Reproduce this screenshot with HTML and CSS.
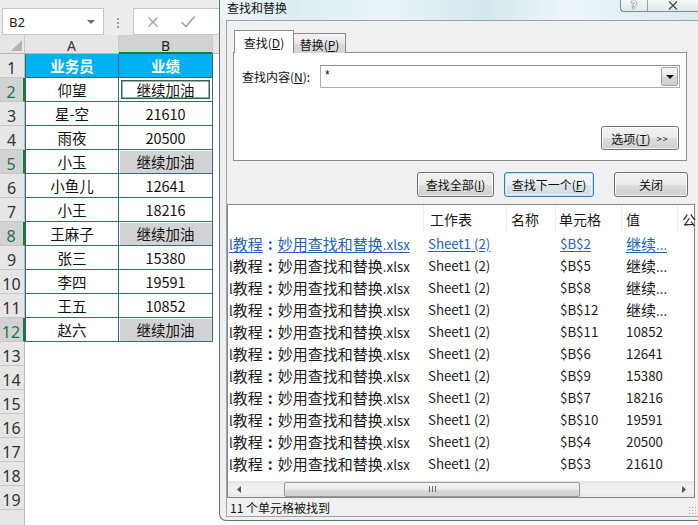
FILE: index.html
```html
<!DOCTYPE html>
<html lang="zh-CN">
<head>
<meta charset="utf-8">
<title>查找和替换</title>
<link rel="stylesheet" href="styles.css">
</head>
<body>
<div class="screen">
  <div class="sheet">
    <div class="fbar">
      <div class="namebox"><span>B2</span><span class="nb-arrow"></span></div>
      <div class="dots"><i></i><i></i><i></i></div>
      <div class="fbox">
        <svg class="ico-x" width="12" height="12" viewBox="0 0 12 12"><path d="M1.5 1.5L10.5 10.5M10.5 1.5L1.5 10.5" stroke="#a3a3a3" stroke-width="1.4" fill="none"/></svg>
        <svg class="ico-ok" width="16" height="13" viewBox="0 0 16 13"><path d="M1.5 7L6 11.5L14.5 1.5" stroke="#a3a3a3" stroke-width="1.6" fill="none"/></svg>
      </div>
    </div>
    <div class="grid">
      <div class="ch corner"><svg width="25" height="19" viewBox="0 0 25 19"><path d="M22 5V16H11Z" fill="#b3b3b3"/></svg></div>
      <div class="ch">A</div>
      <div class="ch sel">B</div>
      <div class="ch last"></div>

      <div class="rh">1</div><div class="c a h">业务员</div><div class="c b h">业绩</div><div class="e"></div>
      <div class="rh on">2</div><div class="c a">仰望</div><div class="c b act">继续加油</div><div class="e"></div>
      <div class="rh">3</div><div class="c a">星-空</div><div class="c b">21610</div><div class="e"></div>
      <div class="rh">4</div><div class="c a">雨夜</div><div class="c b">20500</div><div class="e"></div>
      <div class="rh on">5</div><div class="c a">小玉</div><div class="c b g">继续加油</div><div class="e"></div>
      <div class="rh">6</div><div class="c a">小鱼儿</div><div class="c b">12641</div><div class="e"></div>
      <div class="rh">7</div><div class="c a">小王</div><div class="c b">18216</div><div class="e"></div>
      <div class="rh on">8</div><div class="c a">王麻子</div><div class="c b g">继续加油</div><div class="e"></div>
      <div class="rh">9</div><div class="c a">张三</div><div class="c b">15380</div><div class="e"></div>
      <div class="rh">10</div><div class="c a">李四</div><div class="c b">19591</div><div class="e"></div>
      <div class="rh">11</div><div class="c a">王五</div><div class="c b">10852</div><div class="e"></div>
      <div class="rh on">12</div><div class="c a">赵六</div><div class="c b g">继续加油</div><div class="e"></div>
      <div class="rh">13</div><div class="blank"></div>
      <div class="rh">14</div><div class="blank"></div>
      <div class="rh">15</div><div class="blank"></div>
      <div class="rh">16</div><div class="blank"></div>
      <div class="rh">17</div><div class="blank"></div>
      <div class="rh">18</div><div class="blank"></div>
      <div class="rh">19</div><div class="blank"></div>
      <div class="rh"></div><div class="blank"></div>
    </div>
  </div>

  <div class="dialog">
    <div class="titlebar">
      <span class="title">查找和替换</span>
      <div class="capbtns">
        <span class="cap help">?</span>
        <span class="cap close"><svg width="12" height="9" viewBox="0 0 12 9"><path d="M2 0.5L10 8.5M10 0.5L2 8.5" stroke="#4a4a4a" stroke-width="1.3" fill="none"/></svg></span>
      </div>
    </div>
    <div class="client">
      <div class="tabs">
        <div class="tab active">查找(<u>D</u>)</div>
        <div class="tab">替换(<u>P</u>)</div>
      </div>
      <div class="panel">
        <div class="findrow">
          <span class="lbl">查找内容(<u>N</u>):</span>
          <div class="combo"><span class="val">*</span><span class="drop"><i></i></span></div>
        </div>
        <div class="optrow"><span class="btn opt">选项(<u>T</u>) <small>&gt;&gt;</small></span></div>
      </div>
      <div class="btnrow">
        <span class="btn b1">查找全部(<u>I</u>)</span>
        <span class="btn b2 def">查找下一个(<u>F</u>)</span>
        <span class="btn b3">关闭</span>
      </div>
      <div class="results">
        <div class="lrow head">
          <span class="k1"></span><span class="k2">工作表</span><span class="k3">名称</span><span class="k4">单元格</span><span class="k5">值</span><span class="k6">公</span>
        </div>
        <div class="lbody">
          <div class="lrow link"><span class="k1"><a>l<b class="zh">教程<b class="col">:</b>妙用查找和替换</b>.xlsx</a></span><span class="k2"><a>Sheet1 (2)</a></span><span class="k3"></span><span class="k4"><a>$B$2</a></span><span class="k5"><a><b class="zh">继续</b>...</a></span></div>
          <div class="lrow"><span class="k1">l<b class="zh">教程<b class="col">:</b>妙用查找和替换</b>.xlsx</span><span class="k2">Sheet1 (2)</span><span class="k3"></span><span class="k4">$B$5</span><span class="k5"><b class="zh">继续</b>...</span></div>
          <div class="lrow"><span class="k1">l<b class="zh">教程<b class="col">:</b>妙用查找和替换</b>.xlsx</span><span class="k2">Sheet1 (2)</span><span class="k3"></span><span class="k4">$B$8</span><span class="k5"><b class="zh">继续</b>...</span></div>
          <div class="lrow"><span class="k1">l<b class="zh">教程<b class="col">:</b>妙用查找和替换</b>.xlsx</span><span class="k2">Sheet1 (2)</span><span class="k3"></span><span class="k4">$B$12</span><span class="k5"><b class="zh">继续</b>...</span></div>
          <div class="lrow"><span class="k1">l<b class="zh">教程<b class="col">:</b>妙用查找和替换</b>.xlsx</span><span class="k2">Sheet1 (2)</span><span class="k3"></span><span class="k4">$B$11</span><span class="k5">10852</span></div>
          <div class="lrow"><span class="k1">l<b class="zh">教程<b class="col">:</b>妙用查找和替换</b>.xlsx</span><span class="k2">Sheet1 (2)</span><span class="k3"></span><span class="k4">$B$6</span><span class="k5">12641</span></div>
          <div class="lrow"><span class="k1">l<b class="zh">教程<b class="col">:</b>妙用查找和替换</b>.xlsx</span><span class="k2">Sheet1 (2)</span><span class="k3"></span><span class="k4">$B$9</span><span class="k5">15380</span></div>
          <div class="lrow"><span class="k1">l<b class="zh">教程<b class="col">:</b>妙用查找和替换</b>.xlsx</span><span class="k2">Sheet1 (2)</span><span class="k3"></span><span class="k4">$B$7</span><span class="k5">18216</span></div>
          <div class="lrow"><span class="k1">l<b class="zh">教程<b class="col">:</b>妙用查找和替换</b>.xlsx</span><span class="k2">Sheet1 (2)</span><span class="k3"></span><span class="k4">$B$10</span><span class="k5">19591</span></div>
          <div class="lrow"><span class="k1">l<b class="zh">教程<b class="col">:</b>妙用查找和替换</b>.xlsx</span><span class="k2">Sheet1 (2)</span><span class="k3"></span><span class="k4">$B$4</span><span class="k5">20500</span></div>
          <div class="lrow"><span class="k1">l<b class="zh">教程<b class="col">:</b>妙用查找和替换</b>.xlsx</span><span class="k2">Sheet1 (2)</span><span class="k3"></span><span class="k4">$B$3</span><span class="k5">21610</span></div>
        </div>
        <div class="hscroll">
          <span class="arr"><svg width="4" height="7" viewBox="0 0 4 7"><path d="M4 0V7L0 3.5Z" fill="#555"/></svg></span>
          <span class="thumb"><span class="grip"><i></i><i></i><i></i></span></span>
          <span class="arr right"><svg width="4" height="7" viewBox="0 0 4 7"><path d="M0 0V7L4 3.5Z" fill="#555"/></svg></span>
        </div>
      </div>
      <div class="status"><span>11 个单元格被找到</span><span class="sizegrip"></span></div>
    </div>
  </div>
</div>
</body>
</html>
```

FILE: styles.css
```css
* { box-sizing: border-box; margin: 0; padding: 0; }
html, body { width: 698px; height: 525px; overflow: hidden; background: #fff; }
body { font-family: "Noto Sans CJK SC", "Noto Sans", sans-serif; color: #111; }

.screen { display: flex; width: 698px; height: 525px; }

/* ---------- spreadsheet ---------- */
.sheet { width: 219px; flex: none; display: flex; flex-direction: column; background: #fff; }
.fbar { height: 44px; background: #ededed; display: flex; align-items: flex-start; padding-top: 8px; }
.namebox {
  margin-left: 2px; width: 102px; height: 27px; background: #fff; border: 1px solid #c6c6c6;
  display: flex; align-items: center; justify-content: space-between; padding: 0 8px 0 6px;
  font: 13px "Noto Sans", sans-serif; color: #222;
}
.nb-arrow { width: 0; height: 0; border-left: 4px solid transparent; border-right: 4px solid transparent; border-top: 4px solid #6a6a6a; }
.dots { margin: 10px 0 0 13px; display: flex; flex-direction: column; gap: 2px; }
.dots i { display: block; width: 2px; height: 2px; background: #a0a0a0; }
.fbox {
  margin-left: 14px; flex: 1; height: 27px; background: #fff; border: 1px solid #c6c6c6; border-right: none;
  display: flex; align-items: center; padding-left: 13px;
}
.ico-ok { margin-left: 21px; }

.grid {
  display: grid;
  grid-template-columns: 25px 94px 94px 6px;
  grid-template-rows: 19px;
  grid-auto-rows: 24px;
  font-size: 14.5px;
}
.ch {
  background: #e6e6e6; border-right: 1px solid #c8c8c8; border-bottom: 1px solid #b8b8b8;
  display: flex; align-items: center; justify-content: center; padding-top: 3px;
  font: 14px "Noto Sans", sans-serif; color: #333;
}
.ch.corner { padding: 0; display: block; }
.ch.sel { background: #d2d2d2; border-bottom: 2px solid #217346; color: #222; }
.ch.last { border-right: none; }

.rh {
  background: #e6e6e6; border-right: 1px solid #bdbdbd; border-bottom: 1px solid #c6c6c6;
  display: flex; align-items: flex-end; justify-content: center;
  font: 16px/18px "Noto Sans", sans-serif; color: #333; padding-right: 1px;
}
.rh.on { background: #d2d2d2; color: #217346; border-right: 2px solid #217346; }

.c {
  display: flex; align-items: center; justify-content: center;
  border-right: 1px solid #2d6d8c; border-bottom: 1px solid #2d6d8c; color: #111;
}
.c.a { border-left: 1px solid #2d6d8c; }
.rh.on + .c.a { border-left-color: #217346; }
.c.h { background: #00b0f0; color: #fff; font-weight: 700; }
.c.g { background: #d3d3d3; box-shadow: inset 1px 1px 0 #fff; }
.c.act { box-shadow: inset 0 0 0 2px #fff, inset 0 0 0 3.5px #3d6150; }
.e { background: #fff; }
.blank { grid-column: span 3; background: #fff; }

/* ---------- dialog ---------- */
.dialog {
  flex: none; width: 479px; height: 521px;
  border-left: 1px solid #6e6e6e; border-bottom: 1px solid #6e6e6e; border-bottom-left-radius: 7px;
  background: #eaf0f3; display: flex; flex-direction: column; overflow: hidden;
}
.titlebar {
  height: 20px; flex: none; display: flex; align-items: flex-start; padding-left: 7px;
  background: linear-gradient(90deg, #eef5f7 0%, #dcedf0 15%, #eaf4f6 35%, #d3e8ec 55%, #edf5f7 72%, #d8ecef 100%);
}
.title { font-size: 12px; line-height: 16px; padding-top: 0; color: #111; }
.capbtns {
  margin-left: auto; display: flex; height: 12px; width: 78px;
  border: 1px solid #858a8f; border-top: none; border-right: none; border-radius: 0 0 0 4px;
  background: linear-gradient(#f3f7f9, #dfe8ec);
}
.cap { display: flex; align-items: center; justify-content: center; height: 11px; }
.cap.help { width: 27px; border-right: 1px solid #9aa1a6; font: 700 11px/11px "DejaVu Sans", sans-serif; color: #fff; text-shadow: 0 0 1px #333, 0 0 1px #333; }
.cap.close { flex: 1; }

.client {
  margin-left: 6px; width: 472px; height: 497px; flex: none;
  background: #f0f0f0; border: 1px solid #a3a3a3; border-right: none;
  display: flex; flex-direction: column; font-size: 12px;
}
.tabs { display: flex; align-items: flex-end; margin: 9px 0 0 7px; height: 23px; position: relative; z-index: 1; }
.tab {
  height: 20px; width: 52px; display: flex; align-items: center; justify-content: center;
  border: 1px solid #898c95; border-left: none; border-bottom: none;
  background: linear-gradient(#f4f4f4, #e6e6e6 50%, #dadada 51%, #d4d4d4); padding-top: 1px;
}
.tab.active { height: 23px; width: 60px; border-left: 1px solid #898c95; background: #fff; padding-top: 0; }
u { text-decoration: underline; text-underline-offset: 1px; }

.panel {
  margin: -1px 0 0 6px; width: 454px; height: 109px; flex: none;
  background: #fff; border: 1px solid #898c95;
  display: flex; flex-direction: column;
}
.findrow { display: flex; align-items: center; margin-top: 12px; }
.lbl { width: 86px; padding-left: 8px; }
.combo {
  width: 360px; height: 23px; border: 1px solid #abadb3; border-top-color: #8e8f8f;
  display: flex; justify-content: space-between; align-items: flex-start; padding: 1px 1px 1px 4px;
}
.val { font: 12px "Liberation Sans", sans-serif; line-height: 12px; padding-top: 2px; }
.drop {
  width: 17px; height: 19px; border: 1px solid #9fa3a8; border-radius: 2px;
  background: linear-gradient(#f6f6f6, #e5e5e5 50%, #d7d7d7 51%, #cfcfcf);
  display: flex; align-items: center; justify-content: center;
}
.drop i { width: 0; height: 0; border-left: 4px solid transparent; border-right: 4px solid transparent; border-top: 4px solid #111; }
.optrow { display: flex; justify-content: flex-end; padding-right: 7px; margin-top: 38px; }

.btn {
  display: flex; align-items: center; justify-content: center; height: 25px;
  border: 1px solid #707070; border-radius: 3px; color: #111;
  background: linear-gradient(#f2f2f2 0%, #ebebeb 50%, #dddddd 51%, #cfcfcf 100%);
  box-shadow: inset 0 0 0 1px rgba(255,255,255,0.7);
}
.btn.opt { width: 78px; height: 24px; }
.btn.opt small { font-size: 9px; margin-left: 6px; letter-spacing: 1px; }
.btnrow { display: flex; margin-top: 11px; height: 25px; flex: none; }
.b1 { margin-left: 190px; width: 77px; }
.b2 { margin-left: 10px; width: 90px; }
.b3 { margin-left: 20px; width: 74px; }
.btn.def { border-color: #3c7fb1; box-shadow: inset 0 0 0 1px #bfe4f8, inset 0 0 0 2px rgba(255,255,255,0.6); background: linear-gradient(#f2f6f8 0%, #ebf0f3 50%, #dce4e8 51%, #d2dbe0 100%); }

.results {
  margin-top: 7px; width: 468px; height: 294px; flex: none; background: #fff;
  border: 1px solid #828790; display: flex; flex-direction: column; font-size: 13.3px;
}
.lrow { display: flex; height: 22px; align-items: center; white-space: nowrap; color: #1a1a1a; }
.lrow.head { height: 27px; flex: none; font-size: 14px; }
.lrow.head span { height: 27px; display: flex; align-items: center; border-right: 1px solid #eeeeee; }
.lrow span { flex: none; overflow: hidden; }
.zh { font-weight: 400; font-size: 15px; }
.col { font-weight: 700; display: inline-block; width: 15px; text-align: center; }
.k1 { width: 196px; padding-left: 1px; }
.k2 { width: 83px; padding-left: 4px; }
.k3 { width: 49px; padding-left: 4px; }
.k4 { width: 66px; padding-left: 4px; }
.k5 { width: 56px; padding-left: 4px; }
.k6 { width: 30px; padding-left: 4px; }
.lrow.head .k2 { padding-left: 6px; }
.lrow.head .k4 { padding-left: 3px; }
.lbody { flex: 1; }
.lrow.link a { color: #2462b3; text-decoration: underline; text-underline-offset: 2px; }

.hscroll {
  height: 16px; flex: none; display: flex; align-items: center;
  background: linear-gradient(#e3e3e3, #f0f0f0 30%, #f0f0f0 70%, #e6e6e6);
}
.arr { width: 17px; height: 16px; display: flex; align-items: center; justify-content: center; margin-left: 2px; }
.arr.right { margin-left: auto; margin-right: 2px; }
.thumb {
  margin-left: 37px; width: 296px; height: 15px; border: 1px solid #979797; border-radius: 2px;
  background: linear-gradient(#f5f5f5, #e9e9e9 50%, #dadada 51%, #d0d0d0);
  display: flex; align-items: center; justify-content: center;
}
.grip { display: flex; gap: 2px; }
.grip i { display: block; width: 1px; height: 6px; background: #6a6a6a; }

.status {
  height: 18px; flex: none; display: flex; align-items: center; justify-content: space-between;
  padding-left: 3px; font-size: 12px; color: #111; background: #f0f0f0;
}
.sizegrip {
  width: 8px; height: 8px; align-self: flex-end; margin: 0 2px 2px 0;
  background: radial-gradient(circle, #a8a8a8 0.8px, transparent 1px) 0 0 / 3px 3px;
}
```
